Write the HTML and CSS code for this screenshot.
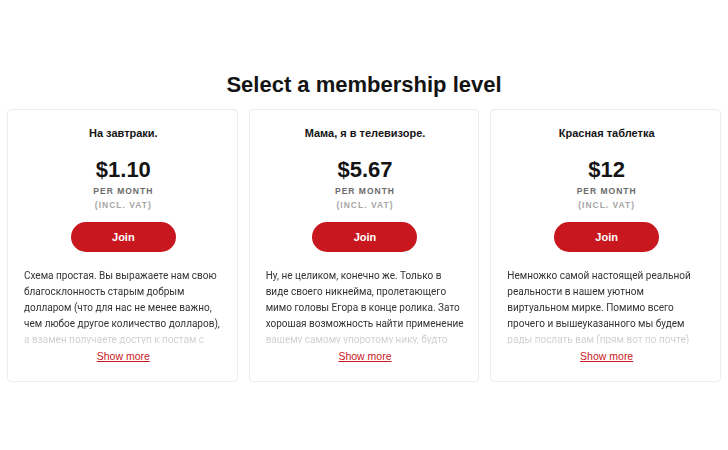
FILE: index.html
```html
<!DOCTYPE html>
<html lang="ru">
<head>
<meta charset="utf-8">
<link rel="stylesheet" href="styles.css">
</head>
<body>
<main class="page">
  <h1 class="heading">Select a membership level</h1>
  <div class="tiers">
    <section class="card">
      <h2 class="tier-name">На завтраки.</h2>
      <div class="price">$1.10</div>
      <div class="period">PER MONTH</div>
      <div class="vat">(INCL. VAT)</div>
      <button class="join">Join</button>
      <div class="desc">
        <p>Схема простая. Вы выражаете нам свою благосклонность старым добрым долларом (что для нас не менее важно, чем любое другое количество долларов), а взамен получаете доступ к постам с</p>
      </div>
      <a class="more" href="#">Show more</a>
    </section>
    <section class="card">
      <h2 class="tier-name">Мама, я в телевизоре.</h2>
      <div class="price">$5.67</div>
      <div class="period">PER MONTH</div>
      <div class="vat">(INCL. VAT)</div>
      <button class="join">Join</button>
      <div class="desc">
        <p>Ну, не целиком, конечно же. Только в виде своего никнейма, пролетающего мимо головы Егора в конце ролика. Зато хорошая возможность найти применение вашему самому упоротому нику, будто</p>
      </div>
      <a class="more" href="#">Show more</a>
    </section>
    <section class="card">
      <h2 class="tier-name">Красная таблетка</h2>
      <div class="price">$12</div>
      <div class="period">PER MONTH</div>
      <div class="vat">(INCL. VAT)</div>
      <button class="join">Join</button>
      <div class="desc">
        <p>Немножко самой настоящей реальной реальности в нашем уютном виртуальном мирке. Помимо всего прочего и вышеуказанного мы будем рады послать вам (прям вот по почте)</p>
      </div>
      <a class="more" href="#">Show more</a>
    </section>
  </div>
</main>
</body>
</html>
```

FILE: styles.css
```css
* { box-sizing: border-box; }
html, body { margin: 0; padding: 0; background: #fff; }
body {
  font-family: "Liberation Sans", Arial, sans-serif;
  color: #141414;
}
.page {
  padding: 71px 7px 0 7px;
}
.heading {
  margin: 0 0 10px 0;
  text-align: center;
  font-size: 22px;
  line-height: 28px;
  font-weight: 700;
}
.tiers {
  display: grid;
  grid-template-columns: repeat(3, 1fr);
  gap: 11px;
}
.card {
  border: 1px solid #ececec;
  border-radius: 4px;
  padding: 15px 14px 18px 16px;
  display: flex;
  flex-direction: column;
  align-items: center;
  height: 273px;
}
.tier-name {
  margin: 0;
  font-size: 11px;
  line-height: 16px;
  font-weight: 700;
}
.price {
  margin-top: 16px;
  font-size: 22px;
  line-height: 26px;
  font-weight: 700;
}
.period {
  margin-top: 1px;
  font-size: 8.5px;
  line-height: 14px;
  font-weight: 700;
  letter-spacing: 1px;
  color: #6b6b6b;
}
.vat {
  font-size: 8.5px;
  line-height: 14px;
  font-weight: 700;
  letter-spacing: 1px;
  color: #a6a6a6;
}
.join {
  margin-top: 10px;
  width: 105px;
  height: 31px;
  border: none;
  border-radius: 16px;
  background: #c8171e;
  color: #fff;
  font-family: inherit;
  font-size: 11px;
  font-weight: 700;
}
.desc {
  margin-top: 16px;
  align-self: stretch;
  height: 78px;
  overflow: hidden;
  -webkit-mask-image: linear-gradient(to bottom, #000 0, #000 62px, rgba(0,0,0,0.26) 68px, rgba(0,0,0,0.2) 78px);
  mask-image: linear-gradient(to bottom, #000 0, #000 62px, rgba(0,0,0,0.26) 68px, rgba(0,0,0,0.2) 78px);
}
.desc p {
  margin: 0;
  font-family: Roboto, "Liberation Sans", Arial, sans-serif;
  font-size: 10px;
  line-height: 16px;
  color: #333;
}
.more {
  margin-top: 5px;
  font-size: 10.5px;
  line-height: 14px;
  color: #c8171e;
  text-decoration: underline;
}
```
